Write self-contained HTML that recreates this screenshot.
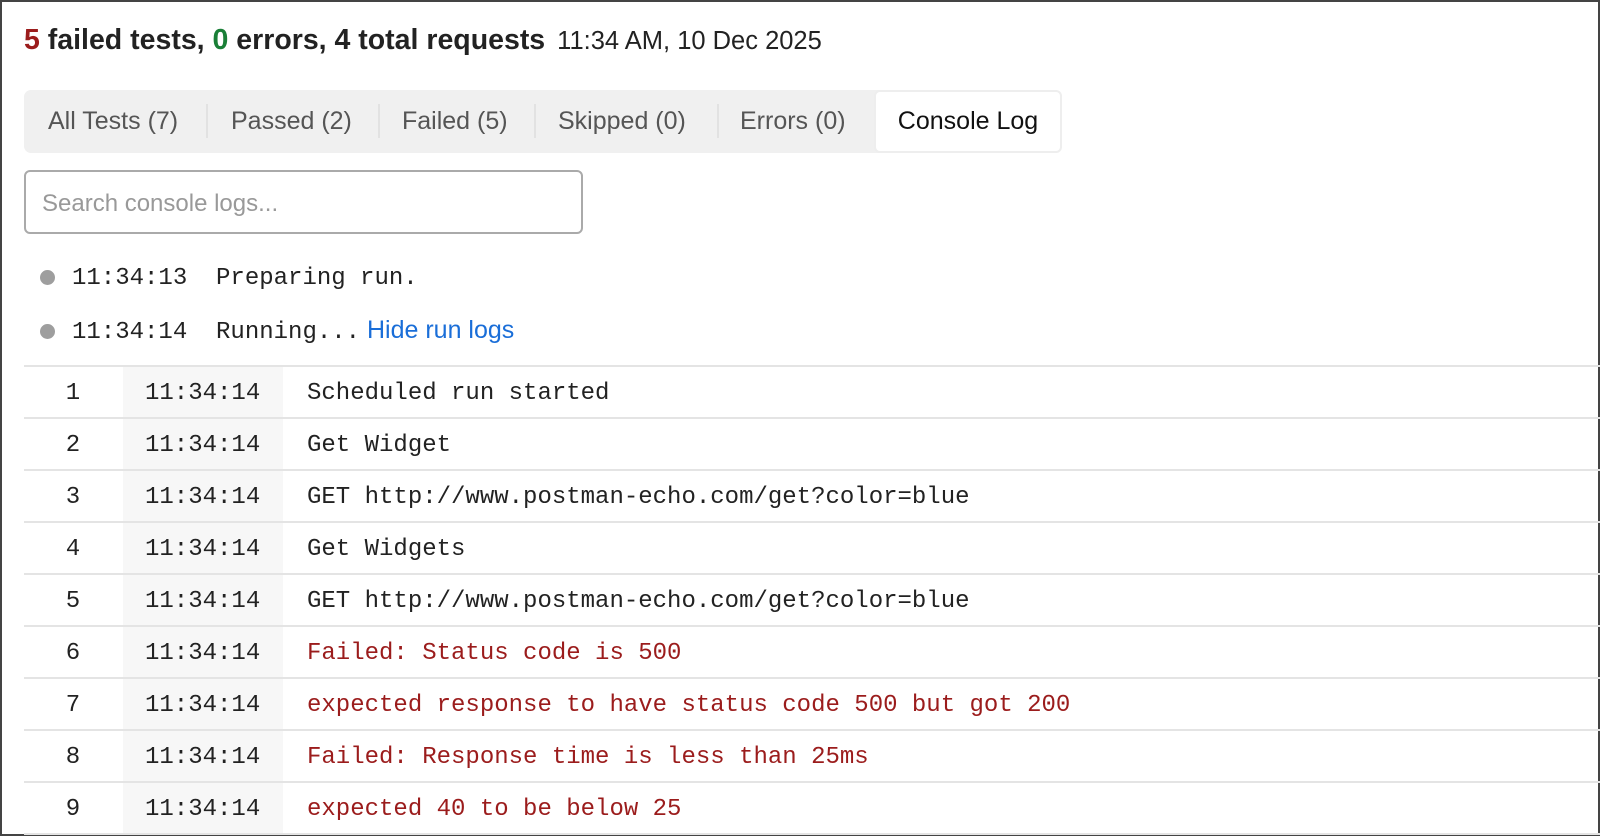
<!DOCTYPE html>
<html><head><meta charset="utf-8"><style>
*{box-sizing:border-box;margin:0;padding:0}
html,body{width:1600px;height:836px;overflow:hidden;background:#fff}
body{font-family:"Liberation Sans",sans-serif;color:#222}
.frame{position:absolute;left:0;top:0;width:1600px;height:836px;border:2px solid #444}
.h{position:absolute;left:24px;top:24px;font-size:28.5px;font-weight:bold;white-space:nowrap;color:#222}
.h .r{color:#9b1c1c}.h .g{color:#1a7f37}
.h .d{font-weight:normal;font-size:25.5px;margin-left:12px}
.tabs{position:absolute;left:24px;top:90px;width:1038px;height:63px;background:#f0f0f0;border-radius:7px}
.tab{position:absolute;top:0;height:63px;line-height:63px;font-size:25px;color:#555}
.sep{position:absolute;top:14px;width:2px;height:34px;background:#e2e2e2}
.act{position:absolute;left:850px;top:0;width:188px;height:63px;background:#fff;border:2px solid #eee;border-radius:6px;font-size:25px;line-height:59px;text-align:center;color:#111}
.search{position:absolute;left:24px;top:170px;width:559px;height:64px;border:2px solid #aaa;border-radius:6px;font-size:24px;color:#999;padding-left:16px;line-height:64px}
.mono{font-family:"Liberation Mono",monospace;font-size:24px}
.ll{position:absolute;left:40px;white-space:pre;color:#222}
.dot{display:inline-block;width:15px;height:15px;border-radius:50%;background:#9e9e9e;margin-right:17px;vertical-align:-1px}
.ll a{font-family:"Liberation Sans",sans-serif;font-size:25px;color:#1a6ed8;text-decoration:none}
.tbl{position:absolute;left:24px;top:365px;width:1576px;border-top:2px solid #e4e4e4}
.row{position:relative;height:52px;border-bottom:2px solid #e4e4e4;white-space:pre}
.row .n{position:absolute;left:0;top:2px;width:98px;text-align:center;line-height:50px}
.row .t{position:absolute;left:99px;width:160px;height:50px;background:#f7f7f7;line-height:54px;padding-left:22px}
.row .m{position:absolute;left:283px;top:2px;line-height:50px}
.red{color:#9b1c1c}
</style></head><body>
<div class="frame"></div>
<div class="h"><span class="r">5</span> failed tests, <span class="g">0</span> errors, 4 total requests<span class="d">11:34 AM, 10 Dec 2025</span></div>
<div class="tabs">
<div class="tab" style="left:24px">All Tests (7)</div><div class="sep" style="left:182px"></div>
<div class="tab" style="left:207px">Passed (2)</div><div class="sep" style="left:354px"></div>
<div class="tab" style="left:378px">Failed (5)</div><div class="sep" style="left:510px"></div>
<div class="tab" style="left:534px">Skipped (0)</div><div class="sep" style="left:693px"></div>
<div class="tab" style="left:716px">Errors (0)</div>
<div class="act">Console Log</div>
</div>
<div class="search">Search console logs...</div>
<div class="ll mono" style="top:265px"><span class="dot"></span>11:34:13  Preparing run.</div>
<div class="ll mono" style="top:316px"><span class="dot"></span>11:34:14  Running...<a> Hide run logs</a></div>
<div class="tbl mono">
<div class="row"><span class="n">1</span><span class="t">11:34:14</span><span class="m">Scheduled run started</span></div>
<div class="row"><span class="n">2</span><span class="t">11:34:14</span><span class="m">Get Widget</span></div>
<div class="row"><span class="n">3</span><span class="t">11:34:14</span><span class="m">GET http://www.postman-echo.com/get?color=blue</span></div>
<div class="row"><span class="n">4</span><span class="t">11:34:14</span><span class="m">Get Widgets</span></div>
<div class="row"><span class="n">5</span><span class="t">11:34:14</span><span class="m">GET http://www.postman-echo.com/get?color=blue</span></div>
<div class="row"><span class="n">6</span><span class="t">11:34:14</span><span class="m red">Failed: Status code is 500</span></div>
<div class="row"><span class="n">7</span><span class="t">11:34:14</span><span class="m red">expected response to have status code 500 but got 200</span></div>
<div class="row"><span class="n">8</span><span class="t">11:34:14</span><span class="m red">Failed: Response time is less than 25ms</span></div>
<div class="row"><span class="n">9</span><span class="t">11:34:14</span><span class="m red">expected 40 to be below 25</span></div>
</div>
</body></html>
